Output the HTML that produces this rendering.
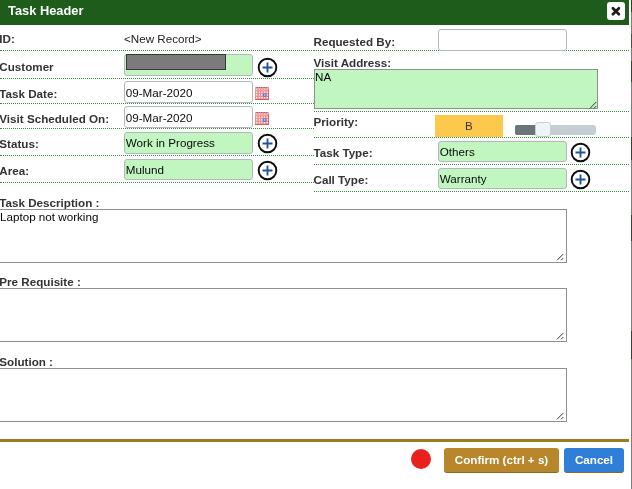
<!DOCTYPE html>
<html>
<head>
<meta charset="utf-8">
<title>Task Header</title>
<style>
*{box-sizing:border-box;margin:0;padding:0}
html,body{width:632px;height:489px;overflow:hidden;background:#fff;font-family:"Liberation Sans",sans-serif;font-size:11.65px;color:#333}
#dlg{position:absolute;left:0;top:0;width:632px;height:489px;overflow:hidden;will-change:transform}
.abs{position:absolute}
#hdr{left:0;top:0;width:629px;height:24.5px;background:#1d5c1a}
#title{left:8px;top:3px;font-size:12.85px;font-weight:bold;color:#fff;line-height:15px;white-space:nowrap}
#close{left:607.2px;top:2.2px;width:17.6px;height:17.6px;background:#fff;border-radius:3px}
.lbl{font-weight:bold;color:#333;font-size:11.65px;line-height:13px;white-space:nowrap}
.txt{font-size:11.65px;line-height:13px;color:#222;white-space:nowrap}
.dot{height:0;border-top:1px dotted #2f8f3a}
.inp{border:1px solid #b4b8bc;border-radius:3px;background:#fff;height:21.5px;width:129px;font-size:11.65px;line-height:13px;color:#0a0a0a;padding:3.7px 0 0 0.8px;white-space:nowrap;overflow:hidden}
.inp.g{padding-top:3px}
.ta{overflow:visible;border:1px solid #8f8f8f;background:#fff;font-size:11.65px;line-height:13px;color:#050505;padding:0}
.g{background:#c1f6c1}
.plus{width:21px;height:21px}
.grip{position:absolute;right:0.5px;bottom:-0.6px;width:8px;height:9px}
.grip.g2{right:2px;bottom:0.6px}
.cal{width:14px;height:13.2px}
.btn{height:24.8px;border-radius:3px;color:#fff;font-weight:bold;font-size:11.65px;line-height:13px;text-align:center;padding-top:5px;white-space:nowrap}
</style>
</head>
<body>
<svg width="0" height="0" style="position:absolute"><defs>
<g id="plus"><circle cx="10.5" cy="10.5" r="8.8" fill="#fff" stroke="#0d0d0d" stroke-width="1.95"/><path d="M5.5 10.5H15.5M10.5 5.5V15.5" stroke="#2152a0" stroke-width="1.85"/></g>
<g id="cal"><rect x="0" y="0" width="14" height="13.2" fill="#f08e8e"/><rect x="0" y="0" width="14" height="3.4" fill="#f4a3a3"/><rect x="0" y="12.3" width="14" height="0.9" fill="#c44a4a"/><rect x="13.3" y="2" width="0.7" height="11.2" fill="#d65a5a"/><rect x="1.20" y="0.3" width="1.6" height="0.8" fill="#5a2a2a" opacity="0.75"/><rect x="3.60" y="0.3" width="1.6" height="0.8" fill="#5a2a2a" opacity="0.75"/><rect x="6.00" y="0.3" width="1.6" height="0.8" fill="#5a2a2a" opacity="0.75"/><rect x="8.40" y="0.3" width="1.6" height="0.8" fill="#5a2a2a" opacity="0.75"/><rect x="10.80" y="0.3" width="1.6" height="0.8" fill="#5a2a2a" opacity="0.75"/><rect x="1.00" y="4.50" width="1.3" height="1.3" fill="#fff" opacity="0.92"/><rect x="3.75" y="4.50" width="1.3" height="1.3" fill="#fff" opacity="0.92"/><rect x="6.15" y="4.50" width="1.3" height="1.3" fill="#fff" opacity="0.92"/><rect x="8.90" y="4.50" width="1.3" height="1.3" fill="#fff" opacity="0.92"/><rect x="11.65" y="4.50" width="1.3" height="1.3" fill="#fff" opacity="0.92"/><rect x="1.00" y="7.25" width="1.3" height="1.3" fill="#fff" opacity="0.92"/><rect x="3.75" y="7.25" width="1.3" height="1.3" fill="#fff" opacity="0.92"/><rect x="6.15" y="7.25" width="1.3" height="1.3" fill="#fff" opacity="0.92"/><rect x="8.90" y="7.25" width="1.3" height="1.3" fill="#fff" opacity="0.92"/><rect x="11.65" y="7.25" width="1.3" height="1.3" fill="#fff" opacity="0.92"/><rect x="1.00" y="10.05" width="1.3" height="1.3" fill="#fff" opacity="0.92"/><rect x="3.75" y="10.05" width="1.3" height="1.3" fill="#fff" opacity="0.92"/><rect x="6.15" y="10.05" width="1.3" height="1.3" fill="#fff" opacity="0.92"/><rect x="8.90" y="10.05" width="1.3" height="1.3" fill="#fff" opacity="0.92"/><rect x="11.65" y="10.05" width="1.3" height="1.3" fill="#fff" opacity="0.92"/><rect x="1.15" y="1.6" width="1" height="0.9" fill="#fff" opacity="0.75"/><rect x="3.90" y="1.6" width="1" height="0.9" fill="#fff" opacity="0.75"/><rect x="6.30" y="1.6" width="1" height="0.9" fill="#fff" opacity="0.75"/><rect x="9.05" y="1.6" width="1" height="0.9" fill="#fff" opacity="0.75"/><rect x="11.80" y="1.6" width="1" height="0.9" fill="#fff" opacity="0.75"/><rect x="8" y="6.3" width="3.6" height="3.6" rx="1.2" fill="#4a7be0"/><rect x="9.2" y="7.2" width="1.2" height="1.5" fill="#dfe8ff"/></g>
<g id="grip"><path d="M1.0 8.3L7.2 2.1M5.0 8.3L7.2 6.1" stroke="#333" stroke-width="1" fill="none"/></g>
</defs></svg>
<div id="dlg">
  <div id="hdr" class="abs"></div>
  <div id="title" class="abs">Task Header</div>
  <div id="close" class="abs">
    <svg width="17.6" height="17.6" viewBox="0 0 17.6 17.6" style="display:block"><path d="M5.9 6.2 L11.9 12.2 M11.9 6.2 L5.9 12.2" stroke="#1c1c1c" stroke-width="2.7" stroke-linecap="round"/></svg>
  </div>

  <!-- left column -->
  <div class="abs lbl" style="left:-0.7px;top:32px">ID:</div>
  <div class="abs txt" style="left:124px;top:32px">&lt;New Record&gt;</div>
  <div class="abs dot" style="left:0;top:50px;width:314px"></div>

  <div class="abs lbl" style="left:-0.7px;top:60px">Customer</div>
  <div class="abs inp g" style="left:124px;top:54px;height:22px"></div>
  <div class="abs" style="left:126px;top:53.7px;width:99.6px;height:16.3px;background:#7b7b7b;border:1px solid #383838"></div>
  <svg class="abs plus" style="left:256.5px;top:56.5px" viewBox="0 0 21 21"><use href="#plus"/></svg>
  <div class="abs dot" style="left:0;top:78px;width:314px"></div>

  <div class="abs lbl" style="left:-0.7px;top:87px">Task Date:</div>
  <div class="abs inp" style="left:124px;top:81px">09-Mar-2020</div>
  <svg class="abs cal" style="left:255px;top:86.8px" viewBox="0 0 14 13.2"><use href="#cal"/></svg>
  <div class="abs dot" style="left:0;top:103px;width:314px"></div>

  <div class="abs lbl" style="left:-0.7px;top:112px">Visit Scheduled On:</div>
  <div class="abs inp" style="left:124px;top:106px">09-Mar-2020</div>
  <svg class="abs cal" style="left:255px;top:112px" viewBox="0 0 14 13.2"><use href="#cal"/></svg>
  <div class="abs dot" style="left:0;top:128px;width:314px"></div>

  <div class="abs lbl" style="left:-0.7px;top:137px">Status:</div>
  <div class="abs inp g" style="left:124px;top:132px">Work in Progress</div>
  <svg class="abs plus" style="left:256.6px;top:133.1px" viewBox="0 0 21 21"><use href="#plus"/></svg>
  <div class="abs dot" style="left:0;top:155px;width:314px"></div>

  <div class="abs lbl" style="left:-0.7px;top:164px">Area:</div>
  <div class="abs inp g" style="left:124px;top:159px;height:21px">Mulund</div>
  <svg class="abs plus" style="left:256.6px;top:160.0px" viewBox="0 0 21 21"><use href="#plus"/></svg>
  <div class="abs dot" style="left:0;top:182px;width:314px"></div>

  <!-- right column -->
  <div class="abs lbl" style="left:313.5px;top:35px">Requested By:</div>
  <div class="abs dot" style="left:314px;top:50px;width:314.5px"></div>
  <div class="abs inp" style="left:438px;top:29px"></div>

  <div class="abs lbl" style="left:313.5px;top:56px">Visit Address:</div>
  <div class="abs ta g" style="left:314px;top:69px;width:284px;height:40px">NA<svg class="grip" viewBox="0 0 8 9"><use href="#grip"/></svg></div>
  <div class="abs dot" style="left:314px;top:111px;width:314.5px"></div>

  <div class="abs lbl" style="left:313.5px;top:115.3px">Priority:</div>
  <div class="abs" style="left:435px;top:115px;width:68px;height:22px;background:#fdc94d;text-align:center;font-size:11.65px;line-height:13px;padding-top:4px;color:#3a3426">B</div>
  <div class="abs" style="left:515px;top:125px;width:81px;height:10px;background:#c5ced3;border-radius:3px"></div>
  <div class="abs" style="left:515px;top:125px;width:22px;height:10px;background:#6b7478;border-radius:2px 0 0 2px"></div>
  <div class="abs" style="left:535px;top:122px;width:15.5px;height:15.4px;background:#eff4f6;border-radius:3px;border:1px solid #c6cfd3"></div>
  <div class="abs dot" style="left:314px;top:137px;width:314.5px"></div>

  <div class="abs lbl" style="left:313.5px;top:146px">Task Type:</div>
  <div class="abs inp g" style="left:438px;top:141px;height:21px">Others</div>
  <svg class="abs plus" style="left:570.3px;top:142.2px" viewBox="0 0 21 21"><use href="#plus"/></svg>
  <div class="abs dot" style="left:314px;top:164px;width:314.5px"></div>

  <div class="abs lbl" style="left:313.5px;top:173px">Call Type:</div>
  <div class="abs inp g" style="left:438px;top:168px;height:21px">Warranty</div>
  <svg class="abs plus" style="left:570.3px;top:169.2px" viewBox="0 0 21 21"><use href="#plus"/></svg>
  <div class="abs dot" style="left:314px;top:191px;width:314.5px"></div>

  <!-- lower -->
  <div class="abs lbl" style="left:-0.7px;top:196px">Task Description :</div>
  <div class="abs ta" style="left:-1px;top:209px;width:568px;height:54px">Laptop not working<svg class="grip g2" viewBox="0 0 8 9"><use href="#grip"/></svg></div>
  <div class="abs lbl" style="left:-0.7px;top:275px">Pre Requisite :</div>
  <div class="abs ta" style="left:-1px;top:288px;width:568px;height:54px"><svg class="grip g2" viewBox="0 0 8 9"><use href="#grip"/></svg></div>
  <div class="abs lbl" style="left:-0.7px;top:355px">Solution :</div>
  <div class="abs ta" style="left:-1px;top:368px;width:568px;height:54px"><svg class="grip g2" viewBox="0 0 8 9"><use href="#grip"/></svg></div>

  <div class="abs" style="left:0;top:439px;width:629px;height:3px;background:#a07a25"></div>
  <div class="abs" style="left:411.2px;top:449px;width:20px;height:20.2px;border-radius:50%;background:#e8211b"></div>
  <div class="abs btn" style="left:444px;top:448px;width:115px;background:#b8862b;border-bottom:1px solid #8c6a1c">Confirm (ctrl + s)</div>
  <div class="abs btn" style="left:564px;top:448px;width:60px;background:#2f7ed8;border-bottom:1px solid #8c6a1c">Cancel</div>

  <div class="abs" style="left:630.8px;top:0;width:1.2px;height:489px;background:#7c7c7c"></div>
  <div class="abs" style="left:630.8px;top:0px;width:1.2px;height:12px;background:#24481f"></div>
  <div class="abs" style="left:630.8px;top:34px;width:1.2px;height:14px;background:#4a4f4a"></div>
  <div class="abs" style="left:630.8px;top:61px;width:1.2px;height:21px;background:#2a4a28"></div>
  <div class="abs" style="left:630.8px;top:137px;width:1.2px;height:23px;background:#2a4a28"></div>
  <div class="abs" style="left:630.8px;top:215px;width:1.2px;height:26px;background:#2a4a28"></div>
  <div class="abs" style="left:630.8px;top:331px;width:1.2px;height:28px;background:#2a4a28"></div>
  <div class="abs" style="left:627px;top:486.5px;width:8px;height:8px;border:1.2px solid #707070;border-radius:0 0 5px 0;border-left:none;border-top:none;background:transparent"></div>
</div>
</body>
</html>
